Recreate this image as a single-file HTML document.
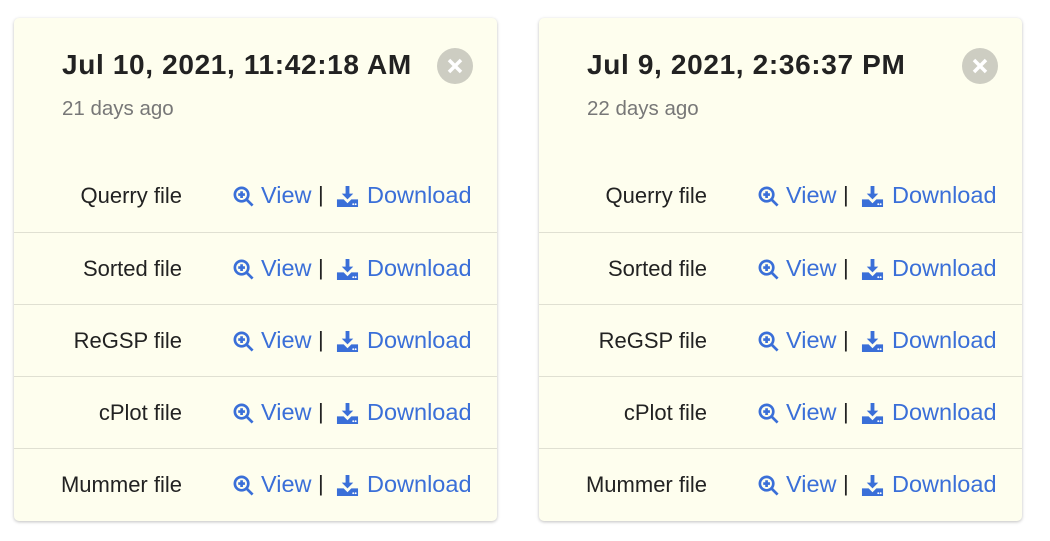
<!DOCTYPE html>
<html><head><style>
body{margin:0;background:#fff;font-family:"Liberation Sans",sans-serif;width:1050px;height:541px;position:relative;overflow:hidden}
.card{position:absolute;top:18px;width:483px;height:503px;background:#fefeee;border-radius:5px;box-shadow:0 1px 3px rgba(0,0,0,.25)}
.t{position:absolute;left:48px;top:31px;font-size:28px;font-weight:bold;color:#222;letter-spacing:0.65px}
.s{position:absolute;left:48px;top:79px;font-size:20.5px;color:#777}
.x{position:absolute;left:423px;top:30px;width:36px;height:36px;border-radius:50%;background:#cdcdc2}
.row{position:absolute;left:0;width:483px;height:72px;border-top:1px solid #e0e0d2}
.row.f{border-top:none}
.lab{position:absolute;right:315px;top:23px;font-size:22px;color:#222;white-space:nowrap}
.lk{position:absolute;top:22px;font-size:23.5px;color:#3a6fd8;white-space:nowrap}
.ic{position:absolute;top:25px}
.bar{position:absolute;left:304px;top:22px;font-size:22px;color:#222}
</style></head><body>
<div class="card" style="left:14px">
<div class="t">Jul 10, 2021, 11:42:18 AM</div><div class="s">21 days ago</div>
<div class="x"><svg width="36" height="36"><path d="M12 12L24 24M24 12L12 24" stroke="#fff" stroke-width="3.5"/></svg></div>
</div>
<div class="card" style="left:539px">
<div class="t">Jul 9, 2021, 2:36:37 PM</div><div class="s">22 days ago</div>
<div class="x"><svg width="36" height="36"><path d="M12 12L24 24M24 12L12 24" stroke="#fff" stroke-width="3.5"/></svg></div>
</div>
<script>
const labels=["Querry file","Sorted file","ReGSP file","cPlot file","Mummer file"];
const icons='<svg class="ic" style="left:218px" width="23" height="23" viewBox="0 0 24 24"><circle cx="10" cy="10" r="7" fill="none" stroke="#3a6fd8" stroke-width="2.8"/><path d="M15 15L21.5 21.5M10 6.5V13.5M6.5 10H13.5" stroke="#3a6fd8" stroke-width="2.8"/></svg><div class="lk" style="left:247px">View</div><div class="bar">|</div><svg class="ic" style="left:322px" width="23" height="23" viewBox="0 0 24 24"><path d="M10 1H14V9H18L12 15L6 9H10Z" fill="#3a6fd8"/><path d="M1 15H8L12 19L16 15H23V23H1Z" fill="#3a6fd8"/><circle cx="18" cy="20" r="1" fill="#fff"/><circle cx="20.5" cy="20" r="1" fill="#fff"/></svg><div class="lk" style="left:353px">Download</div>';
document.querySelectorAll('.card').forEach(c=>{labels.forEach((l,i)=>{const r=document.createElement('div');r.className='row'+(i==0?' f':'');r.style.top=(142+72*i)+'px';r.innerHTML='<div class="lab">'+l+'</div>'+icons;c.appendChild(r);});});
</script>
</body></html>
